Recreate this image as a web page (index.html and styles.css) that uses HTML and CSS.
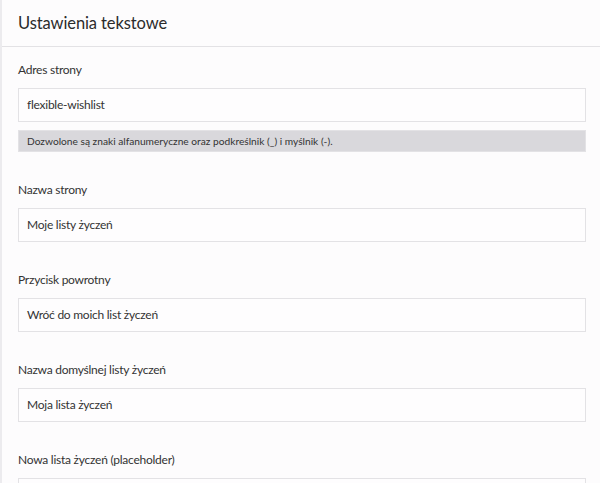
FILE: index.html
```html
<!DOCTYPE html>
<html lang="pl">
<head>
<meta charset="utf-8">
<title>Ustawienia tekstowe</title>
<link rel="stylesheet" href="styles.css">
</head>
<body>
<div class="panel">
  <div class="panel-header">
    <h2 class="panel-title">Ustawienia tekstowe</h2>
  </div>
  <div class="panel-body">
    <div class="field">
      <label class="field-label">Adres strony</label>
      <div class="field-input">flexible-wishlist</div>
      <div class="field-help">Dozwolone są znaki alfanumeryczne oraz podkreślnik (_) i myślnik (-).</div>
    </div>
    <div class="field">
      <label class="field-label">Nazwa strony</label>
      <div class="field-input">Moje listy życzeń</div>
    </div>
    <div class="field">
      <label class="field-label">Przycisk powrotny</label>
      <div class="field-input">Wróć do moich list życzeń</div>
    </div>
    <div class="field">
      <label class="field-label">Nazwa domyślnej listy życzeń</label>
      <div class="field-input">Moja lista życzeń</div>
    </div>
    <div class="field">
      <label class="field-label">Nowa lista życzeń (placeholder)</label>
      <div class="field-input"></div>
    </div>
  </div>
</div>
</body>
</html>
```

FILE: styles.css
```css
html, body {
  margin: 0;
  padding: 0;
  background: #fdfcfd;
}
body {
  font-family: Lato, "Open Sans", sans-serif;
  color: #333;
  height: 483px;
  overflow: hidden;
}
.panel {
  border-left: 2px solid #ecebee;
  min-height: 483px;
  box-sizing: border-box;
}
.panel-header {
  height: 46px;
  border-bottom: 1px solid #e3e2e5;
  padding-left: 16px;
  display: flex;
  align-items: center;
}
.panel-title {
  margin: 0;
  font-size: 16.5px;
  font-weight: 400;
  color: #2b2b2b;
  padding-bottom: 1px;
  letter-spacing: -0.1px;
}
.panel-body {
  padding: 14px 14px 0 16px;
}
.field {
  margin-bottom: 29px;
}
.field-label {
  display: block;
  font-size: 12px;
  line-height: 18px;
  color: #333;
  margin-bottom: 9px;
  letter-spacing: -0.25px;
}
.field-input {
  height: 32px;
  border: 1px solid #e3e2e5;
  background: #fefdfe;
  box-sizing: content-box;
  padding: 0 8px;
  font-size: 12px;
  line-height: 32px;
  color: #333;
  letter-spacing: -0.25px;
}
.field-help {
  margin-top: 8px;
  height: 22px;
  background: #d9d8dc;
  border: 1px solid #e3e2e5;
  box-sizing: border-box;
  padding: 0 8px;
  font-size: 10.2px;
  line-height: 20px;
  color: #333;
}
```
